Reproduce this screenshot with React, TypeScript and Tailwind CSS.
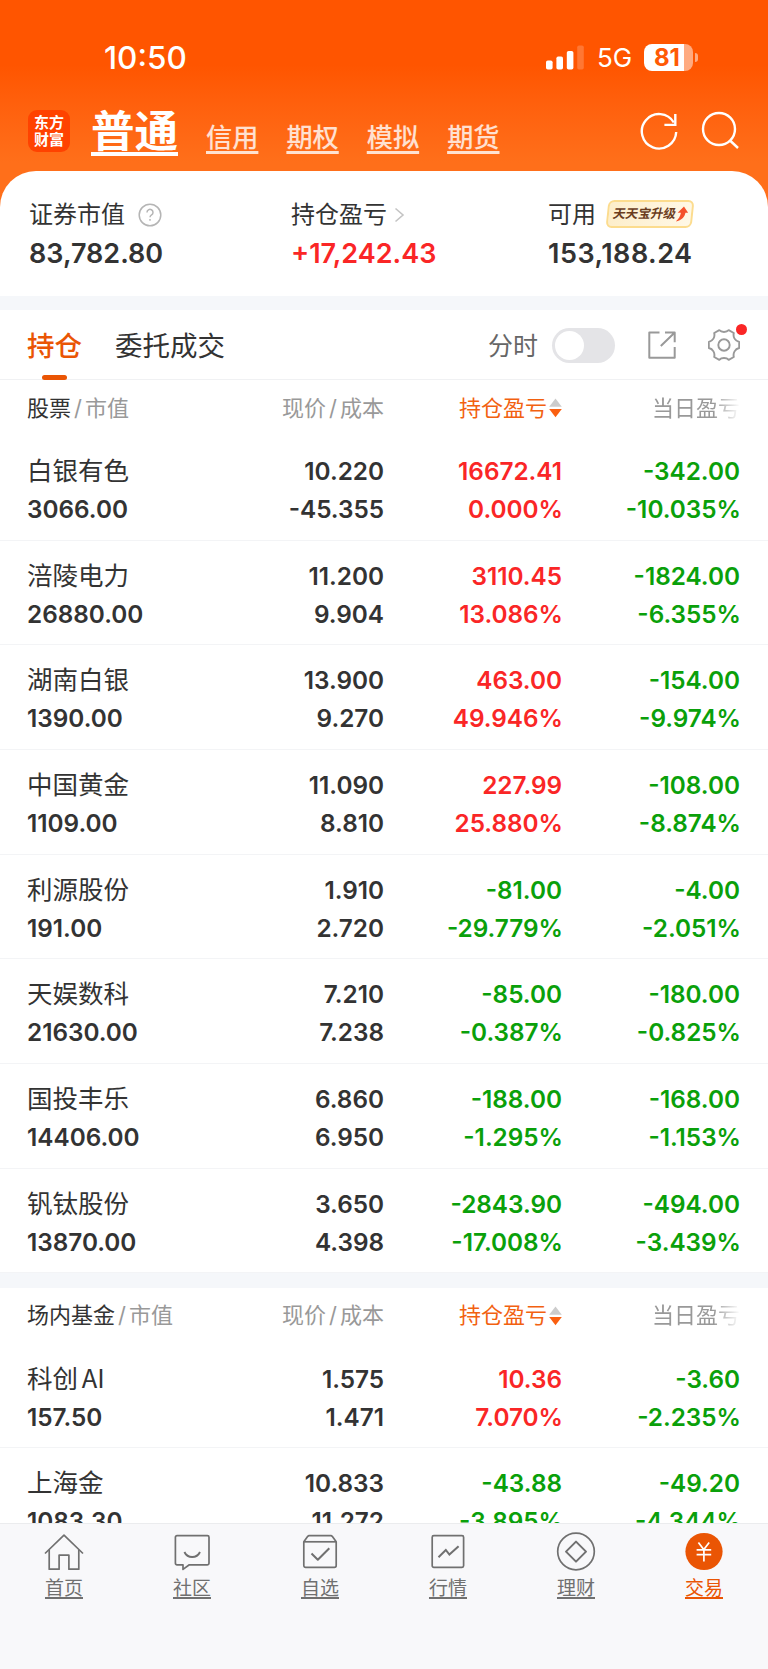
import { useState } from 'react';
import clsx from 'clsx';

interface Holding {
  name: string;
  value: string;
  price: string;
  cost: string;
  profit: string;
  profitRate: string;
  today: string;
  todayRate: string;
}

const stocks: Holding[] = [
  { name: '白银有色', value: '3066.00', price: '10.220', cost: '-45.355', profit: '16672.41', profitRate: '0.000%', today: '-342.00', todayRate: '-10.035%' },
  { name: '涪陵电力', value: '26880.00', price: '11.200', cost: '9.904', profit: '3110.45', profitRate: '13.086%', today: '-1824.00', todayRate: '-6.355%' },
  { name: '湖南白银', value: '1390.00', price: '13.900', cost: '9.270', profit: '463.00', profitRate: '49.946%', today: '-154.00', todayRate: '-9.974%' },
  { name: '中国黄金', value: '1109.00', price: '11.090', cost: '8.810', profit: '227.99', profitRate: '25.880%', today: '-108.00', todayRate: '-8.874%' },
  { name: '利源股份', value: '191.00', price: '1.910', cost: '2.720', profit: '-81.00', profitRate: '-29.779%', today: '-4.00', todayRate: '-2.051%' },
  { name: '天娱数科', value: '21630.00', price: '7.210', cost: '7.238', profit: '-85.00', profitRate: '-0.387%', today: '-180.00', todayRate: '-0.825%' },
  { name: '国投丰乐', value: '14406.00', price: '6.860', cost: '6.950', profit: '-188.00', profitRate: '-1.295%', today: '-168.00', todayRate: '-1.153%' },
  { name: '钒钛股份', value: '13870.00', price: '3.650', cost: '4.398', profit: '-2843.90', profitRate: '-17.008%', today: '-494.00', todayRate: '-3.439%' },
];

const funds: Holding[] = [
  { name: '科创 AI', value: '157.50', price: '1.575', cost: '1.471', profit: '10.36', profitRate: '7.070%', today: '-3.60', todayRate: '-2.235%' },
  { name: '上海金', value: '1083.30', price: '10.833', cost: '11.272', profit: '-43.88', profitRate: '-3.895%', today: '-49.20', todayRate: '-4.344%' },
];

const accounts = ['信用', '期权', '模拟', '期货'];

const navItems = [
  { label: '首页', icon: <HomeIcon /> },
  { label: '社区', icon: <ChatIcon /> },
  { label: '自选', icon: <BoxIcon /> },
  { label: '行情', icon: <TrendIcon /> },
  { label: '理财', icon: <CoinIcon /> },
  { label: '交易', icon: <TradeIcon /> },
];

function HomeIcon() {
  return (
    <svg className="w-10 h-10" viewBox="0 0 40 40" fill="none" stroke="currentColor" strokeWidth="1.7" strokeLinejoin="round">
      <path d="M1 21.5 20 3.2 39 21.5" />
      <path d="M5.2 18v19.2h9.9V23.2h9.8v14h9.9V18" />
    </svg>
  );
}

function ChatIcon() {
  return (
    <svg className="w-10 h-10" viewBox="0 0 40 40" fill="none" stroke="currentColor" strokeWidth="1.7" strokeLinejoin="round">
      <path d="M5 3.6h30.4a1.6 1.6 0 0 1 1.6 1.6v26a1.6 1.6 0 0 1-1.6 1.6H17.3L11 37.4v-4.6H5a1.6 1.6 0 0 1-1.6-1.6v-26A1.6 1.6 0 0 1 5 3.6Z" />
      <path d="M12.4 20c3.2 6.7 12.4 6.7 15.6 0" strokeWidth="1.9" />
    </svg>
  );
}

function BoxIcon() {
  return (
    <svg className="w-10 h-10" viewBox="0 0 40 40" fill="none" stroke="currentColor" strokeWidth="1.7" strokeLinejoin="round">
      <path d="M3.8 9.8 7.6 4.6a2 2 0 0 1 1.6-.9h21.6a2 2 0 0 1 1.6.9l3.8 5.2v23.8a1.8 1.8 0 0 1-1.8 1.8H5.6a1.8 1.8 0 0 1-1.8-1.8Z" />
      <path d="M4 9.8h32" />
      <path d="m11.5 21.5 6.3 6.2 11.5-11.5" strokeWidth="2" />
    </svg>
  );
}

function TrendIcon() {
  return (
    <svg className="w-10 h-10" viewBox="0 0 40 40" fill="none" stroke="currentColor" strokeWidth="1.7">
      <rect x="4.2" y="3.7" width="31.4" height="31.6" rx="1.6" />
      <path d="m10.5 25.2 7.3-7.2 3.6 4.6 9.2-8.4" strokeWidth="2" />
    </svg>
  );
}

function CoinIcon() {
  return (
    <svg className="w-10 h-10" viewBox="0 0 40 40" fill="none" stroke="currentColor" strokeWidth="1.7" strokeLinejoin="round">
      <circle cx="20" cy="19.5" r="18.3" />
      <path d="m20 9.6 10 10-10 10-10-10Z" strokeWidth="2" />
    </svg>
  );
}

function TradeIcon() {
  return (
    <svg className="w-10 h-10" viewBox="0 0 40 40" fill="none">
      <circle cx="20" cy="19.5" r="18.6" fill="#ea5504" />
      <path d="m14.4 10.6 5.4 7 5.4-7M12.6 17.8h14.6M12.6 22.6h14.6M19.9 17.6v11.8" stroke="#fff" strokeWidth="1.7" />
    </svg>
  );
}

function StatusBar() {
  return (
    <div className="flex items-center justify-between h-[114px] pl-[104px] pr-[70px] text-white">
      <span className="mt-px text-[31.5px] font-medium leading-none">10:50</span>
      <div className="flex items-center">
        <svg className="w-[38px] h-[25px]" viewBox="0 0 38 25" fill="currentColor">
          <rect x="0" y="15.5" width="6.6" height="9" rx="1.8" />
          <rect x="10.4" y="11.4" width="6.6" height="13.1" rx="1.8" />
          <rect x="20.8" y="6" width="6.6" height="18.5" rx="1.8" />
          <rect x="31.2" y="0.5" width="6.6" height="24" rx="1.8" opacity="0.2" />
        </svg>
        <span className="ml-[13px] mt-[2px] w-[34px] text-[26px] leading-none">5G</span>
        <div className="ml-[13px] w-[49px] h-[27px] rounded-[8px] bg-linear-to-r from-white from-82% to-white/50 to-82% pl-[10px] text-[24px] leading-[27px] font-bold text-[#ff5a05]">81</div>
        <div className="ml-[2px] w-[3px] h-[9px] rounded-r-full bg-white/50"></div>
      </div>
    </div>
  );
}

function AccountBar() {
  return (
    <div className="flex h-[57px] pl-7 pr-[28px] text-white">
      <div className="mt-[-4px] w-[42px] h-[42px] rounded-[9px] bg-[#ff4200] flex flex-col items-center justify-center text-[15px] leading-[17px] font-bold">
        <span>东方</span>
        <span>财富</span>
      </div>
      <span className="ml-[21px] mt-[-13px] text-[43.5px] leading-[60px] font-bold underline decoration-[4px] underline-offset-[5px]">普通</span>
      <div className="ml-[28px] mt-px flex gap-[28px]">
        {accounts.map((account) => (
          <span key={account} className="text-[26.2px] leading-[46px] font-medium text-white/80 underline decoration-[3px] underline-offset-[4px]">{account}</span>
        ))}
      </div>
      <svg className="ml-auto mt-[-3px] w-10 h-10" viewBox="0 0 40 40" fill="none" stroke="currentColor" strokeWidth="2.4">
        <path d="M37.2 21A17.2 17.2 0 1 1 34.8 11.5" />
        <path d="M36.3 3v10.9H25.4" />
      </svg>
      <svg className="ml-[21px] mt-[-3px] w-10 h-10" viewBox="0 0 40 40" fill="none" stroke="currentColor" strokeWidth="2.4">
        <circle cx="19" cy="18" r="16" />
        <path d="m30 29.5 8 7.5" />
      </svg>
    </div>
  );
}

function Summary() {
  return (
    <div className="grid grid-cols-[262px_257px_1fr] h-[125px] pl-[29px] pt-[27px] rounded-t-[36px] bg-white text-[#333]">
      <div>
        <div className="flex items-center h-[34px] text-[24px]">
          证券市值
          <svg className="ml-[13px] w-6 h-6" viewBox="0 0 24 24" fill="none" stroke="#b5b5b5" strokeWidth="1.5">
            <circle cx="12" cy="12" r="10.8" />
            <path d="M9 9.4a3 3 0 1 1 4.6 2.5c-1 .7-1.6 1.1-1.6 2.4" />
            <path d="M12 16v1.8" />
          </svg>
        </div>
        <div className="mt-[6px] h-8 text-[27px] leading-8 font-semibold">83,782.80</div>
      </div>
      <div>
        <div className="flex items-center h-[34px] text-[24px]">
          持仓盈亏
          <svg className="ml-[7px] w-[11px] h-4" viewBox="0 0 11 16" fill="none" stroke="#c4c4c4" strokeWidth="1.6">
            <path d="m1.5 1.5 7.5 6.5-7.5 6.5" />
          </svg>
        </div>
        <div className="mt-[6px] h-8 text-[27px] leading-8 font-semibold text-[#fa2626]">+17,242.43</div>
      </div>
      <div>
        <div className="flex items-center h-[34px] text-[24px]">
          可用
          <div className="ml-[11px] mt-[-3px] w-[86px] h-[28px] -skew-x-6 rounded-[6px] border-2 border-[#fcdc8e] bg-linear-to-r from-[#fdeecb] to-[#fff8e6] flex items-center pl-[4px] text-[12.6px] leading-none font-bold text-[#6b3d1e]">
            <span className="-skew-x-6 whitespace-nowrap">天天宝升级</span>
            <svg className="w-3 h-4" viewBox="0 0 12 16">
              <path d="M7.2 .5 12 6.8H9.3C9 11 6.500 14.500 .5 15.500 3.300 13 4.500 10.500 4.800 6.800H1.500Z" fill="#f4512c" />
            </svg>
          </div>
        </div>
        <div className="mt-[6px] h-8 text-[27px] leading-8 font-semibold tracking-[0.5px]">153,188.24</div>
      </div>
    </div>
  );
}

function TabBar() {
  const [tab, setTab] = useState('持仓');
  const [timeline, setTimeline] = useState(false);

  return (
    <div className="flex items-center h-[70px] pl-[27px] pr-[28px] border-b border-[#f0f1f3]">
      {['持仓', '委托成交'].map((name) => (
        <button
          key={name}
          onClick={() => setTab(name)}
          className={clsx('relative h-full mr-[33px] pt-1 text-[27.5px] cursor-pointer', tab === name ? 'font-medium text-[#ea5504]' : 'text-[#333]')}
        >
          {name}
          {tab === name && <span className="absolute bottom-[-1px] left-1/2 -ml-[13px] w-[25px] h-[5px] rounded-full bg-[#ea5504]"></span>}
        </button>
      ))}
      <span className="ml-auto mt-[4px] text-[25px] text-[#666]">分时</span>
      <button
        onClick={() => setTimeline(!timeline)}
        className={clsx('ml-[14px] mt-px w-[63px] h-[35px] p-[3px] rounded-full flex items-center cursor-pointer', timeline ? 'bg-[#ea5504] justify-end' : 'bg-[#e4e4e7]')}
      >
        <span className="w-[29px] h-[29px] rounded-full bg-white"></span>
      </button>
      <svg className="ml-[33px] w-7 h-7" viewBox="0 0 28 28" fill="none" stroke="#999" strokeWidth="2" strokeLinejoin="round">
        <path d="M11.5 1.5H1.3v25.2h25.4V16" />
        <path d="M17 1.5h9.7v9.7M26.5 1.7 12.8 15" />
      </svg>
      <div className="relative ml-8">
        <svg className="w-8 h-8" viewBox="0 0 32 32" fill="none" stroke="#999" strokeWidth="1.9" strokeLinejoin="round">
          <path d="M11.3 1.2C13.5 3.6 18.5 3.6 20.7 1.2L25.8 4C24.8 8 27 12 31.2 13V19C27 20 24.8 24 25.8 28L20.7 30.8C18.5 28.4 13.5 28.4 11.3 30.8L6.2 28C7.2 24 5 20 .8 19V13C5 12 7.2 8 6.2 4Z" />
          <circle cx="16" cy="16" r="5.7" />
        </svg>
        <span className="absolute top-[-5px] right-[-7px] w-[11px] h-[11px] rounded-full bg-[#fa2626]"></span>
      </div>
    </div>
  );
}

function TableHead({ title }: { title: string }) {
  return (
    <div className="grid grid-cols-[177px_180px_178px_178px] items-center h-[56px] pl-[27px] text-[22px] text-[#999] text-right whitespace-nowrap">
      <div className="text-left">
        <span className="text-[#333]">{title}</span>
        <span className="mx-[3px]">/</span>市值
      </div>
      <div>现价<span className="mx-[3px]">/</span>成本</div>
      <div className="flex items-center justify-end text-[#f26110]">
        持仓盈亏
        <svg className="ml-[2px] w-[13px] h-5" viewBox="0 0 13 20">
          <path d="M6.5 .5 12.8 8.8H.2Z" fill="#ccc" />
          <path d="M6.5 19.3.2 11h12.6Z" fill="#fa5f10" />
        </svg>
      </div>
      <div className="mask-r-from-85% mask-r-to-100%">当日盈亏</div>
    </div>
  );
}

function HoldingRow({ item }: { item: Holding }) {
  const tone = (value: string) => (value.startsWith('-') ? 'text-[#0aa00a]' : 'text-[#fa2626]');

  return (
    <div className="grid grid-cols-[177px_180px_178px_178px] h-[104.66px] pl-[27px] pt-4 border-b border-[#f3f4f6] text-[24.3px] leading-[38px] font-semibold text-[#333] text-right">
      <div className="text-left">
        <p className="-mt-0.5 mb-0.5 text-[25.5px] font-normal font-['Noto_Sans_CJK_SC',sans-serif] [word-spacing:-2px]">{item.name}</p>
        <p>{item.value}</p>
      </div>
      <div>
        <p>{item.price}</p>
        <p>{item.cost}</p>
      </div>
      <div className={tone(item.profit)}>
        <p>{item.profit}</p>
        <p className="mr-[-1px]">{item.profitRate}</p>
      </div>
      <div className={tone(item.today)}>
        <p>{item.today}</p>
        <p className="mr-[-1px]">{item.todayRate}</p>
      </div>
    </div>
  );
}

export default function App() {
  return (
    <div className="w-[768px] h-[1669px] flex flex-col overflow-hidden bg-white font-[Inter,'Noto_Sans_CJK_SC',sans-serif]">
      {/* Header */}
      <div className="shrink-0 bg-linear-to-b from-[#ff5500] from-22% to-[#ff6f1a] to-55%">
        <StatusBar />
        <AccountBar />
        <Summary />
      </div>
      <div className="shrink-0 h-[14px] bg-[#f5f7fa]"></div>

      {/* Positions */}
      <div className="flex-1 min-h-0 overflow-hidden">
        <TabBar />
        <TableHead title="股票" />
        {stocks.map((item) => (
          <HoldingRow key={item.name} item={item} />
        ))}
        <div className="h-[14.5px] bg-[#f5f7fa]"></div>
        <TableHead title="场内基金" />
        {funds.map((item) => (
          <HoldingRow key={item.name} item={item} />
        ))}
      </div>

      {/* Bottom navigation */}
      <nav className="shrink-0 grid grid-cols-6 h-[146px] pt-2 border-t border-[#ebecee] bg-[#f8f8fa] text-[#707070]">
        {navItems.map(({ label, icon }) => (
          <a key={label} className={clsx('flex flex-col items-center', label === '交易' && 'text-[#ea5504]')}>
            {icon}
            <span className="mt-[2px] text-[19px] leading-[30px] underline decoration-[1.5px] underline-offset-[2px]">{label}</span>
          </a>
        ))}
      </nav>
    </div>
  );
}
